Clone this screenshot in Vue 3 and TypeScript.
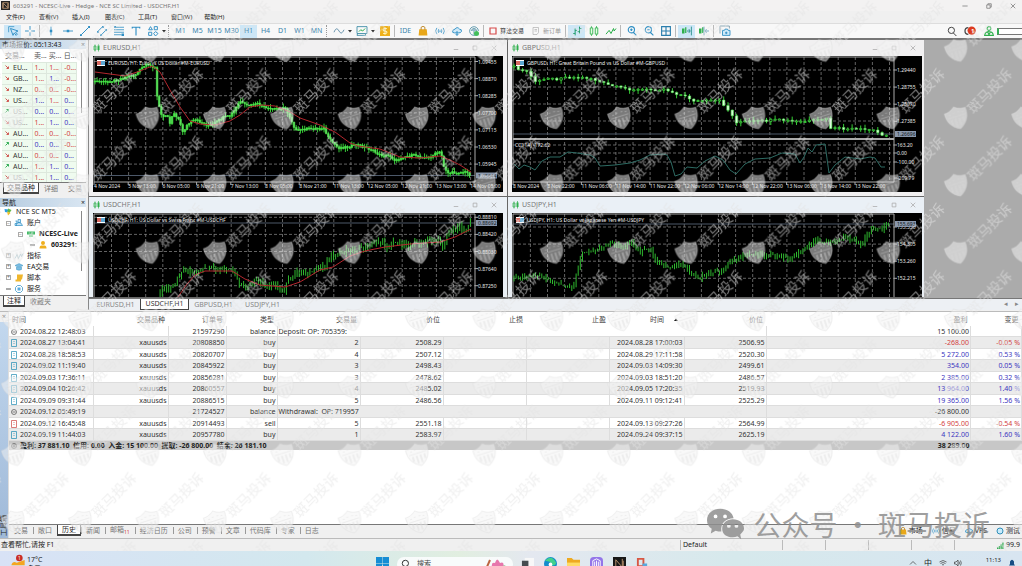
<script setup lang="ts">
type Point = [number, number]
interface Shape { d: string; f?: string; s?: string; w?: number }
interface Tool { id: string; label: string; icon?: string; text?: string; kind?: 'sep' | 'grip' | 'caret' | 'wide'; on?: boolean; off?: boolean }
interface Label { at: number; text: string }
interface Chart {
  id: string; title: string; caption: string; box: string; left: number; top: number
  axis: number; floor: number; bottom: number; columns: number[]; rows: number[]
  prices: Label[]; times: Label[]; tag: Label; wicks: string; up: string; down: string
  average: string; oscillator: string; active: boolean
}

const blue = '#2f8fc4'
const green = '#2eb04c'
const icons: Record<string, Shape[]> = {
  cursor: [{ d: 'M4 4l4 11 2-4 3 4 2-2-3-3 4-2z', s: blue, w: 1.5 }, { d: 'M1 10V1h9', s: blue, w: 1.2 }],
  cross: [{ d: 'M8 0v6M8 10v6M0 8h6M10 8h6', s: blue, w: 1.5 }],
  vline: [{ d: 'M8 1v14', s: blue, w: 1.3 }, { d: 'M6 6h4v4H6z', f: blue }],
  hline: [{ d: 'M0 8h16', s: blue, w: 1.4 }, { d: 'M6 6h4v4H6z', f: blue }],
  trend: [{ d: 'M2 14L14 2', s: blue, w: 1.6 }, { d: 'M0 13h3v3H0zM13 0h3v3h-3z', f: blue }],
  channel: [{ d: 'M1 9l8-8M6 15l9-9', s: blue, w: 1.5 }, { d: 'M0 8h3v3H0zM8 0h3v3H8zM5 13h3v3H5zM13 5h3v3h-3z', f: blue }],
  fibo: [{ d: 'M0 2h16M0 6h16M0 10h16M0 14h12', s: blue, w: 1.3 }, { d: 'M12 12h4v4h-4zM0 0h3v3H0z', f: blue }],
  text: [{ d: 'M2 4V2h12v2M8 2v13', s: blue, w: 1.8 }],
  shapes: [{ d: 'M4 1l3 5H1zM10 1h5v5h-5zM1 10h5v5H1zM12 9l4 3-4 4-3-4z', s: blue, w: 1.5 }],
  wave: [{ d: 'M0 10c3-7 5-7 8-2s5 4 8-2', s: '#4b7f9d', w: 1.3 }],
  template: [{ d: 'M0 1h16v11H0zM1 12l-1 3h14l-1-3', s: '#3c8ba5', w: 1.4 }, { d: 'M3 9l3-3 3 2 4-4', s: green, w: 1.6 }],
  dollar: [{ d: 'M0 0h16v16H0z', f: '#efb019' }, { d: 'M11 4H7Q4 4 5 7l6 2q1 3-2 3H5M8 2v12', s: '#fff6c5', w: 1.5 }],
  bag: [{ d: 'M2 5h12l1 10H1z', f: '#e8a719' }, { d: 'M5 6V2q3-3 6 0v4', s: '#b77d16', w: 1.4 }],
  signal: [{ d: 'M3 3q-4 5 0 10M6 5q-2 3 0 6M13 3q4 5 0 10M10 5q2 3 0 6', s: blue, w: 1.3 }, { d: 'M7 7h2v2H7z', f: blue }],
  cloud: [{ d: 'M4 11Q0 11 1 8 2 5 5 5q3-5 7 0 4 0 3 4-1 2-4 2zM8 8v7M6 13l2 2 2-2', f: '#cfe9f8', s: blue, w: 1.5 }],
  globe: [{ d: 'M13 13A7 7 0 1 1 15 8M4 8a4 4 0 0 1 8 0M6 8a2 2 0 0 1 4 0M8 8v6', s: '#43889f', w: 1.3 }, { d: 'M12 8a4 4 0 1 1 0 8 4 4 0 0 1 0-8', f: '#43bf5b' }],
  stop: [{ d: 'M2 2h12v12H2z', s: '#d64b4b', w: 2.4 }],
  order: [{ d: 'M2 1h11v10l-3 4H2zM5 5h5M5 8h5', s: '#aaa', w: 1.3 }],
  bars: [{ d: 'M5 4v11M2 12h3M5 7h3M12 1v11M9 9h3M12 4h3', s: '#189a68', w: 1.6 }],
  candles: [{ d: 'M4 0v16M12 0v16', s: green, w: 1.2 }, { d: 'M2 3h4v10H2zM10 3h4v10h-4z', f: '#e6ffe6', s: green, w: 1.4 }],
  line: [{ d: 'M0 13l5-6 3 5 4-8 1 4 3-4', s: green, w: 1.6 }],
  plus: [{ d: 'M12 6A5 5 0 1 1 2 6a5 5 0 0 1 10 0M10 10l5 5M5 6h4M7 4v4', s: blue, w: 1.8 }],
  minus: [{ d: 'M12 6A5 5 0 1 1 2 6a5 5 0 0 1 10 0M10 10l5 5M5 6h4', s: blue, w: 1.8 }],
  tile: [{ d: 'M1 1h14v14H1zM8 1v14M1 8h14', s: '#2b7ead', w: 1.8 }],
  scroll: [{ d: 'M0 4h4v8H0zM5 2h2v9H5z', f: green }, { d: 'M8 8h5M11 5l2 3-2 3M15 1v14', s: '#238c88', w: 1.4 }],
  shift: [{ d: 'M0 4h4v8H0zM5 2h2v9H5z', f: green }, { d: 'M10 8h6M12 5l-2 3 2 3M8 1v14', s: '#5593b2', w: 1.2 }],
  camera: [{ d: 'M0 12V0h15v4', s: '#4f7b91', w: 1 }, { d: 'M4 7h3l1-2h4l1 2h3v8H4z', f: '#d0ebfa', s: blue, w: 1.4 }, { d: 'M10 9v4M8 11h4', s: blue, w: 1.5 }],
  search: [{ d: 'M12 7A5 5 0 1 1 2 7a5 5 0 0 1 10 0M10 11l5 5', s: '#444', w: 1.6 }],
  user: [{ d: 'M8 1a3 3 0 1 1 0 6 3 3 0 0 1 0-6M1 15q1-6 7-6t7 6zM6 10l2 4 2-4', s: green, w: 1.7 }],
  pair: [{ d: 'M4 1v14M11 0v15', s: green, w: 1.4 }, { d: 'M2 4h4v8H2z', s: green, w: 1.4 }, { d: 'M9 3h4v9H9z', f: green }],
  brand: [{ d: 'M1 2l8 1-2 6-5-1z', f: '#2e9fe6' }, { d: 'M8 1l7 3-4 6-4-3z', f: '#62b947' }, { d: 'M6 7l7 3-5 5z', f: '#f4bd24' }],
  accounts: [{ d: 'M6 1h5v6H6zM2 13q1-6 6-6t7 6zM1 4h3v5H0v4h4', f: '#c5e4f7', s: blue, w: 1.4 }],
  server: [{ d: 'M0 3h16v6H0zM4 11h8v2H4z', f: '#42b966' }, { d: 'M3 6h3M8 6h5', s: '#fff', w: 1 }],
  person: [{ d: 'M8 0a4 4 0 1 1 0 8 4 4 0 0 1 0-8M1 15q0-6 4-6h6q4 0 4 6z', f: '#efaf1e' }],
  indicator: [{ d: 'M0 13l4-8 3 8 4-9 2 5 3-6', s: '#75a8b8', w: 1.3 }],
  expert: [{ d: 'M0 5l8-4 8 4-8 4zM3 8v5q5 3 10 0V8', f: '#78bce3', s: '#3d91bd', w: 1 }],
  script: [{ d: 'M4 1h12l-2 10H4zM1 11h11v4H1z', f: '#efb62c' }],
  service: [{ d: 'M5 1h6l4 4v6l-4 4H5l-4-4V5z', s: blue, w: 1.5 }, { d: 'M5 5h6v6H5z', f: '#57aade' }],
  ring: [{ d: 'M8 2a6 6 0 1 1 0 12A6 6 0 0 1 8 2', f: '#c9ebfb', s: '#318fb8', w: 2 }],
}

const sep = (id: string): Tool => ({ id, label: '', kind: 'sep' })
const caret = (id: string): Tool => ({ id, label: '更多', kind: 'caret' })
const tools: Tool[] = [
  { id: 'cursor', label: '光标', icon: 'cursor', on: true }, { id: 'cross', label: '十字', icon: 'cross' }, sep('s1'),
  { id: 'v', label: '垂直线', icon: 'vline' }, { id: 'h', label: '水平线', icon: 'hline' }, { id: 't', label: '趋势线', icon: 'trend' },
  { id: 'c', label: '通道', icon: 'channel' }, { id: 'f', label: '斐波那契', icon: 'fibo' }, { id: 'x', label: '文本', icon: 'text' },
  { id: 'o', label: '图形', icon: 'shapes' }, caret('c1'), { id: 'g1', label: '', kind: 'grip' },
  ...['M1', 'M5', 'M15', 'M30', 'H1', 'H4', 'D1', 'W1', 'MN'].map((p): Tool => ({ id: p, label: p, text: p, on: p === 'H1' })),
  { id: 'g2', label: '', kind: 'grip' }, { id: 'w', label: '指标', icon: 'wave' }, caret('c2'),
  { id: 'tp', label: '模板', icon: 'template' }, caret('c3'), { id: 'd', label: '报价', icon: 'dollar' }, sep('s2'),
  { id: 'ide', label: 'IDE', text: 'IDE' }, { id: 'bag', label: '商店', icon: 'bag' }, { id: 'sig', label: '信号', icon: 'signal' },
  { id: 'cl', label: '云', icon: 'cloud' }, { id: 'gl', label: '网络', icon: 'globe' }, sep('s3'),
  { id: 'algo', label: '算法交易', icon: 'stop', text: '算法交易', kind: 'wide' }, { id: 'ord', label: '新订单', icon: 'order', text: '新订单', kind: 'wide', off: true }, sep('s4'),
  { id: 'bars', label: '柱形图', icon: 'bars', on: true }, { id: 'can', label: '蜡烛图', icon: 'candles' }, { id: 'line', label: '折线图', icon: 'line' }, sep('s5'),
  { id: 'in', label: '放大', icon: 'plus' }, { id: 'out', label: '缩小', icon: 'minus' }, { id: 'tile', label: '平铺', icon: 'tile' }, sep('s6'),
  { id: 'scr', label: '自动滚动', icon: 'scroll', on: true }, { id: 'shf', label: '平移', icon: 'shift' }, sep('s7'), { id: 'cam', label: '截图', icon: 'camera' },
]
const menus = ['文件(F)', '查看(V)', '插入(I)', '图表(C)', '工具(T)', '窗口(W)', '帮助(H)']

const quotes = [
  ['d', 'EU...', '1...', '1...', '-0...', 'rrr'], ['d', 'GB...', '1...', '1...', '-0...', 'rbr'], ['d', 'NZ...', '0...', '0...', '-0...', 'rrr'],
  ['d', 'US...', '1...', '1...', '0...', 'brb'], ['u', 'US...', '0...', '0...', '0...', 'bbb'], ['d', 'US...', '1...', '1...', '0...', 'rbb'],
  ['d', 'AU...', '0...', '0...', '-0...', 'rrr'], ['u', 'AU...', '0...', '0...', '-0...', 'bbr'], ['d', 'AU...', '0...', '0...', '0...', 'rrb'],
  ['u', 'AU...', '1...', '1...', '0...', 'rbb'], ['d', 'US...', '1...', '1...', '0...', 'rbb'],
]
const tree = [
  { text: 'NCE SC MT5', icon: 'brand', level: 0, bold: false, mark: '' }, { text: '账户', icon: 'accounts', level: 1, bold: false, mark: '−' },
  { text: 'NCESC-Live', icon: 'server', level: 2, bold: true, mark: '−' }, { text: '603291:', icon: 'person', level: 3, bold: true, mark: '' },
  { text: '指标', icon: 'indicator', level: 1, bold: false, mark: '+' }, { text: 'EA交易', icon: 'expert', level: 1, bold: false, mark: '+' },
  { text: '脚本', icon: 'script', level: 1, bold: false, mark: '+' }, { text: '服务', icon: 'service', level: 1, bold: false, mark: '' },
]

function levelAt(points: Point[], x: number): number {
  for (let i = 1; i < points.length; i++) {
    const [x0, y0] = points[i - 1]
    const [x1, y1] = points[i]
    if (x <= x1) return y0 + ((y1 - y0) * (x - x0)) / (x1 - x0)
  }
  return points[points.length - 1][1]
}
function noise(n: number): number {
  const v = Math.sin(n * 12.9898) * 43758.5453
  return v - Math.floor(v)
}
type Style = 'solid' | 'candle' | 'bar'
function draw(points: Point[], step: number, style: Style, spread: number) {
  let wicks = '', up = '', down = ''
  const last = points[points.length - 1][0]
  let open = points[0][1]
  let i = 0
  for (let x = points[0][0]; x <= last; x += step, i++) {
    const close = levelAt(points, x) + (noise(i + 3) - 0.5) * spread * 0.6
    const a = Math.min(open, close), b = Math.max(open, close)
    const hi = a - noise(i + 40) * spread, lo = b + noise(i + 90) * spread
    wicks += `M${x.toFixed(1)} ${hi.toFixed(1)}V${lo.toFixed(1)}`
    if (style !== 'bar') {
      const half = style === 'candle' ? 1.2 : 0.8
      const body = `M${(x - half).toFixed(1)} ${a.toFixed(1)}h${half * 2}v${Math.max(1, b - a).toFixed(1)}h${-half * 2}z`
      if (close > open + 0.6) down += body
      else up += body
    }
    open = close
  }
  return { wicks, up, down }
}
function curve(points: Point[]): string {
  return points.map(([x, y], i) => `${i ? 'L' : 'M'}${x} ${y}`).join('')
}
function range(from: number, step: number, count: number): number[] {
  return Array.from({ length: count }, (_, i) => from + step * i)
}

const leftTimes = ['4 Nov 2024', '5 Nov 13:00', '6 Nov 05:00', '6 Nov 21:00', '7 Nov 13:00', '8 Nov 05:00', '8 Nov 21:00', '11 Nov 13:00', '12 Nov 05:00', '12 Nov 21:00', '13 Nov 13:00', '14 Nov 05:00']
const rightTimes = ['8 Nov 2024', '8 Nov 22:00', '11 Nov 06:00', '11 Nov 14:00', '11 Nov 22:00', '12 Nov 06:00', '12 Nov 14:00', '12 Nov 22:00', '13 Nov 06:00', '13 Nov 14:00', '13 Nov 22:00']
const spaced = (texts: string[], from: number): Label[] => texts.map((text, i) => ({ text, at: from + i * 34.2 }))
const priced = (texts: string[], from: number): Label[] => texts.map((text, i) => ({ text, at: from + i * 17.1 }))

const charts: Chart[] = [
  {
    id: 'EURUSD', title: 'EURUSD,H1', caption: 'EURUSD, H1: Euro vs US Dollar #M-EURUSD', box: '93 56 410 136', left: 94, top: 57, axis: 475, floor: 182, bottom: 182,
    columns: range(111.5, 17.1, 22), rows: range(61.5, 17.1, 7),
    prices: priced(['1.09455', '1.08870', '1.08285', '1.07700', '1.07115', '1.06530', '1.05945'], 61.5), times: spaced(leftTimes, 94), tag: { at: 175.5, text: '1.05644' },
    ...draw([[95, 81], [105, 82], [117, 80], [125, 77], [135, 75], [142, 68], [146, 65], [155, 67], [156, 92], [160, 110], [162, 118], [167, 113], [170, 124], [173, 112], [178, 118], [183, 132], [188, 124], [195, 120], [203, 123], [210, 126], [218, 121], [222, 118], [230, 116], [235, 110], [240, 101], [246, 106], [258, 104], [267, 109], [285, 108], [290, 117], [296, 131], [305, 129], [324, 128], [328, 138], [338, 148], [345, 147], [358, 145], [370, 149], [380, 155], [390, 156], [396, 161], [402, 157], [415, 155], [428, 158], [435, 154], [441, 152], [443, 165], [448, 173], [466, 172], [471, 176]], 2.14, 'solid', 4),
    average: curve([[95, 72], [110, 74], [125, 76], [140, 71], [152, 66], [160, 72], [170, 90], [180, 107], [190, 121], [200, 124], [215, 125], [230, 121], [240, 115], [250, 107], [262, 105], [275, 106], [290, 112], [300, 118], [320, 125], [335, 132], [350, 143], [358, 146], [380, 149], [400, 157], [420, 158], [440, 156], [450, 160], [460, 165], [471, 172]]), oscillator: '', active: false,
  },
  {
    id: 'GBPUSD', title: 'GBPUSD,H1', caption: 'GBPUSD, H1: Great Britain Pound vs US Dollar #M-GBPUSD', box: '512 56 410 136', left: 513, top: 57, axis: 894, floor: 138, bottom: 182,
    columns: range(530.4, 17.1, 22), rows: [70, 87, 104, 121, 145, 153, 162],
    prices: [...priced(['1.29440', '1.28755', '1.28070', '1.27385'], 70), { at: 145, text: '163.20' }, { at: 153, text: '0.00' }, { at: 162, text: '-100.00' }, { at: 178, text: '-209.79' }],
    times: spaced(rightTimes, 513), tag: { at: 134, text: '1.26696' },
    ...draw([[514, 66], [518, 70], [527, 71], [531, 77], [535, 82], [540, 80], [547, 77], [555, 80], [560, 77], [590, 78], [605, 84], [620, 88], [640, 90], [665, 89], [672, 92], [684, 96], [695, 101], [720, 101], [725, 106], [731, 114], [736, 122], [760, 121], [780, 120], [800, 122], [827, 119], [830, 128], [845, 129], [873, 130], [880, 134], [888, 135]], 4.28, 'candle', 4),
    average: '', oscillator: curve([[514, 164], [519, 169], [524, 165], [530, 167], [535, 170], [542, 161], [550, 157], [560, 157], [568, 152], [577, 153], [590, 155], [595, 158], [600, 166], [615, 165], [630, 163], [640, 160], [650, 155], [663, 154], [667, 155], [671, 162], [675, 176], [681, 174], [687, 167], [697, 168], [705, 161], [715, 156], [723, 160], [730, 170], [736, 174], [745, 164], [755, 159], [770, 158], [782, 153], [795, 154], [800, 163], [804, 157], [808, 148], [812, 152], [816, 145], [825, 144], [829, 173], [835, 165], [845, 157], [860, 159], [870, 157], [875, 158], [881, 167], [885, 167]]), active: false,
  },
  {
    id: 'USDCHF', title: 'USDCHF,H1', caption: 'USDCHF, H1: US Dollar vs Swiss Franc #M-USDCHF', box: '93 213 410 85', left: 94, top: 214, axis: 475, floor: 298, bottom: 298,
    columns: range(111.5, 17.1, 22), rows: range(217.3, 17.1, 5),
    prices: priced(['0.88810', '0.88420', '0.88030', '0.87640', '0.87250'], 217.3), times: [], tag: { at: 223, text: '0.88692' },
    ...draw([[158, 300], [161, 292], [163, 285], [166, 290], [170, 288], [175, 283], [180, 272], [185, 270], [192, 272], [200, 270], [212, 267], [220, 269], [232, 268], [238, 280], [243, 287], [250, 284], [257, 280], [262, 285], [270, 285], [278, 287], [283, 292], [288, 282], [296, 272], [307, 275], [315, 269], [325, 267], [330, 258], [340, 252], [350, 250], [365, 248], [375, 243], [383, 241], [386, 250], [395, 242], [405, 245], [420, 243], [430, 240], [440, 241], [442, 250], [448, 232], [460, 226], [463, 231], [471, 222]], 2.14, 'bar', 5),
    average: curve([[178, 297], [187, 284], [195, 275], [205, 271], [232, 271], [245, 279], [260, 285], [285, 287], [300, 282], [320, 270], [333, 267], [350, 256], [365, 251], [385, 247], [410, 244], [440, 242], [455, 237], [471, 229]]), oscillator: '', active: true,
  },
  {
    id: 'USDJPY', title: 'USDJPY,H1', caption: 'USDJPY, H1: US Dollar vs Japanese Yen #M-USDJPY', box: '512 213 410 85', left: 513, top: 214, axis: 894, floor: 298, bottom: 298,
    columns: range(530.4, 17.1, 22), rows: range(227, 17.1, 4),
    prices: priced(['155.350', '154.305', '153.260', '152.215'], 227), times: [], tag: { at: 224, text: '155.693' },
    ...draw([[514, 278], [525, 277], [535, 274], [545, 278], [555, 282], [565, 287], [573, 286], [577, 272], [582, 252], [590, 251], [600, 248], [610, 243], [620, 247], [632, 243], [640, 252], [650, 249], [657, 263], [670, 268], [680, 264], [690, 272], [699, 278], [710, 272], [722, 272], [730, 262], [740, 257], [755, 254], [780, 256], [790, 259], [803, 250], [815, 240], [830, 243], [845, 237], [855, 240], [861, 246], [866, 235], [875, 228], [882, 229], [889, 222]], 2.14, 'bar', 4),
    average: '', oscillator: '', active: true,
  },
]

interface Deal { time: string; order: string; kind: string; note?: string; volume?: string; price?: string; closed?: string; exit?: string; profit: string; change?: string }
const deals: Deal[] = [
  { time: '2024.08.22 12:48:03', order: '21597290', kind: 'balance', note: 'Deposit: OP: 705359:', profit: '15 100.00' },
  { time: '2024.08.27 13:04:41', order: '20808850', kind: 'buy', volume: '2', price: '2508.29', closed: '2024.08.28 17:00:03', exit: '2506.95', profit: '-268.00', change: '-0.05 %' },
  { time: '2024.08.28 18:58:53', order: '20820707', kind: 'buy', volume: '4', price: '2507.12', closed: '2024.08.29 17:11:58', exit: '2520.30', profit: '5 272.00', change: '0.53 %' },
  { time: '2024.09.02 11:19:40', order: '20845922', kind: 'buy', volume: '3', price: '2498.43', closed: '2024.09.03 14:09:30', exit: '2499.61', profit: '354.00', change: '0.05 %' },
  { time: '2024.09.03 17:36:11', order: '20856281', kind: 'buy', volume: '3', price: '2478.62', closed: '2024.09.03 18:51:20', exit: '2486.57', profit: '2 385.00', change: '0.32 %' },
  { time: '2024.09.04 10:26:42', order: '20860557', kind: 'buy', volume: '4', price: '2485.02', closed: '2024.09.05 17:20:35', exit: '2519.93', profit: '13 964.00', change: '1.40 %' },
  { time: '2024.09.09 09:31:44', order: '20886515', kind: 'buy', volume: '5', price: '2486.56', closed: '2024.09.11 09:12:41', exit: '2525.29', profit: '19 365.00', change: '1.56 %' },
  { time: '2024.09.12 05:49:19', order: '21724527', kind: 'balance', note: 'Withdrawal:  OP: 719957', profit: '-26 800.00' },
  { time: '2024.09.12 16:45:48', order: '20914493', kind: 'sell', volume: '5', price: '2551.18', closed: '2024.09.13 09:27:26', exit: '2564.99', profit: '-6 905.00', change: '-0.54 %' },
  { time: '2024.09.19 11:44:03', order: '20957780', kind: 'buy', volume: '1', price: '2583.97', closed: '2024.09.24 09:37:15', exit: '2625.19', profit: '4 122.00', change: '1.60 %' },
]
const heads = ['时间', '交易品种', '订单号', '类型', '交易量', '价位', '止损', '止盈', '时间', '价位', '盈利', '变更']
const boxTabs = ['交易', '敞口', '历史', '新闻', '邮箱', '经济日历', '公司', '预警', '文章', '代码库', '专家', '日志']
const services = [{ text: '市场', icon: 'bag' }, { text: '信号', icon: 'signal' }, { text: 'VPS', icon: 'cloud' }, { text: '测试', icon: 'ring' }]
const tone = (deal: Deal) => (!deal.change ? '' : deal.profit.startsWith('-') ? 'r' : 'b')
</script>

<template>
  <div class="app">
    <header class="title">
      <svg class="logo" viewBox="0 0 16 16" aria-hidden="true"><path d="M0 0h16v16H0z" fill="#252525" /><path d="M4 12V4l8 8V4M3 3h10v10H3z" fill="none" stroke="#c29b78" stroke-width="1.4" /></svg>
      <span class="name">603291 - NCESC-Live - Hedge - NCE SC Limited - USDCHF,H1</span>
      <div class="winctl">
        <button aria-label="最小化"><svg viewBox="0 0 16 16"><path d="M1 8h14" /></svg></button>
        <button aria-label="还原"><svg viewBox="0 0 16 16"><path d="M2 5h9v9H2zM5 5V2h9v9h-3" /></svg></button>
        <button aria-label="关闭"><svg viewBox="0 0 16 16"><path d="M2 2l12 12M14 2L2 14" /></svg></button>
      </div>
    </header>
    <nav class="menu"><button v-for="m in menus" :key="m">{{ m }}</button></nav>

    <div class="toolbar">
      <template v-for="t in tools" :key="t.id">
        <i v-if="t.kind === 'sep'" class="sep"></i>
        <i v-else-if="t.kind === 'grip'" class="grip"></i>
        <button v-else-if="t.kind === 'caret'" class="caret" :aria-label="t.label"><svg viewBox="0 0 8 8"><path d="M0 2h8L4 7z" fill="#333" /></svg></button>
        <button v-else class="tool" :class="{ on: t.on, off: t.off, wide: t.kind === 'wide' }" :aria-label="t.label">
          <svg v-if="t.icon" class="ic" viewBox="0 0 16 16"><path v-for="(p, i) in icons[t.icon]" :key="i" :d="p.d" :fill="p.f ?? 'none'" :stroke="p.s ?? 'none'" :stroke-width="p.w" /></svg>
          <span v-if="t.text">{{ t.text }}</span>
        </button>
      </template>
      <div class="right">
        <button class="tool" aria-label="搜索"><svg class="ic" viewBox="0 0 16 16"><path v-for="(p, i) in icons.search" :key="i" :d="p.d" fill="none" :stroke="p.s" :stroke-width="p.w" /></svg></button>
        <button class="tool alert" aria-label="通知"><svg viewBox="0 0 16 12"><path d="M6 2a4 4 0 0 0 0 8" fill="none" stroke="#444" stroke-width="1.5" /><circle cx="10" cy="5.5" r="5" fill="#dc3a20" /></svg><b>1</b></button>
        <button class="tool" aria-label="账户"><svg class="ic" viewBox="0 0 16 16"><path v-for="(p, i) in icons.user" :key="i" :d="p.d" fill="none" :stroke="p.s" :stroke-width="p.w" /></svg></button>
        <i class="meter"></i>
      </div>
    </div>

    <main class="work">
      <aside class="side">
        <section class="market">
          <h2>市场报价: 05:13:43<button aria-label="关闭市场报价">×</button></h2>
          <div class="pane quotes">
            <table>
              <thead><tr><th>交易...</th><th>卖...</th><th>买...</th><th>日...</th></tr></thead>
              <tbody>
                <tr v-for="(q, n) in quotes" :key="n" :class="{ dim: n === 4 || n === 5 || n === 10 }">
                  <td><svg class="dir" viewBox="0 0 8 8"><path v-if="q[0] === 'u'" d="M1 7l6-6M3 1h4v4" stroke="#35ae58" /><path v-else d="M1 1l6 6M7 3v4H3" stroke="#d05a55" /></svg>{{ q[1] }}</td>
                  <td v-for="k in 3" :key="k" :class="q[5][k - 1]">{{ q[k + 1] }}</td>
                </tr>
              </tbody>
            </table>
            <i class="thumb"></i>
          </div>
          <div class="tabs"><button class="sel">交易品种</button><button>详细</button><button>交易</button></div>
        </section>
        <section class="navigator">
          <h2>导航<button aria-label="关闭导航">×</button></h2>
          <div class="pane">
            <ul>
              <li v-for="n in tree" :key="n.text" :class="['l' + n.level, { bold: n.bold }]">
                <i v-if="n.level" class="knot" :class="{ leaf: !n.mark }">{{ n.mark }}</i>
                <svg class="ic" viewBox="0 0 16 16"><path v-for="(p, i) in icons[n.icon]" :key="i" :d="p.d" :fill="p.f ?? 'none'" :stroke="p.s ?? 'none'" :stroke-width="p.w" /></svg>{{ n.text }}
              </li>
            </ul>
            <i class="thumb"></i>
          </div>
          <div class="tabs"><button class="sel">注释</button><button>收藏夹</button></div>
        </section>
      </aside>

      <div class="desk">
        <div class="windows">
          <section v-for="c in charts" :key="c.id" class="win" :class="{ cool: c.active }">
            <h3>
              <svg class="ic" viewBox="0 0 16 16"><path v-for="(p, i) in icons.pair" :key="i" :d="p.d" :fill="p.f ?? 'none'" :stroke="p.s ?? 'none'" :stroke-width="p.w" /></svg>{{ c.title }}
              <span class="winctl">
                <button aria-label="最小化"><svg viewBox="0 0 16 16"><path d="M2 12h12" /></svg></button>
                <button aria-label="最大化"><svg viewBox="0 0 16 16"><path d="M3 3h10v10H3z" /></svg></button>
                <button aria-label="关闭"><svg viewBox="0 0 16 16"><path d="M2 2l12 12M14 2L2 14" /></svg></button>
              </span>
            </h3>
            <svg class="chart" :viewBox="c.box" role="img" :aria-label="c.caption">
              <g class="grid">
                <line v-for="x in c.columns" :key="'x' + x" :x1="x" :x2="x" :y1="c.top" :y2="c.bottom" />
                <line v-for="y in c.rows" :key="'y' + y" :x1="c.left" :x2="c.axis" :y1="y" :y2="y" />
              </g>
              <line class="bid" :x1="c.left" :x2="c.axis" :y1="c.tag.at" :y2="c.tag.at" />
              <path class="frame" :d="`M${c.left} ${c.bottom}V${c.top}H${c.axis}V${c.bottom}`" />
              <path v-if="c.times.length" class="base" :d="`M${c.left} ${c.bottom}H${c.axis}`" />
              <path class="wick" :d="c.wicks" :class="{ thin: c.active }" />
              <path class="up" :d="c.up" :class="{ solid: c.average }" />
              <path class="down" :d="c.down" :class="{ solid: c.average }" />
              <path v-if="c.average" class="average" :d="c.average" />
              <template v-if="c.oscillator">
                <path class="split" :d="`M${c.left} 139H${c.axis}`" />
                <path class="osc" :d="c.oscillator" />
                <text :x="c.left + 2" y="147">CCI(14) -172.62</text>
              </template>
              <g v-for="p in c.prices" :key="p.text"><path class="tick" :d="`M${c.axis} ${p.at}h3`" /><text :x="c.axis + 3" :y="p.at + 2">{{ p.text }}</text></g>
              <rect class="tag" :x="c.axis + 1" :y="c.tag.at - 3" width="21" height="6" /><text class="tagtext" :x="c.axis + 3" :y="c.tag.at + 2">{{ c.tag.text }}</text>
              <g v-for="t in c.times" :key="t.text"><path class="tick" :d="`M${t.at} 182v3`" /><text :x="t.at" y="188">{{ t.text }}</text></g>
              <rect :x="c.left + 3" :y="c.top + 3" width="8" height="6" fill="#fff" /><path :d="`M${c.left + 3} ${c.top + 4}h4v4h-4z`" fill="#d86a62" /><path :d="`M${c.left + 7} ${c.top + 4}h4v4h-4z`" fill="#5ba7d3" />
              <text :x="c.left + 14" :y="c.top + 8">{{ c.caption }}</text>
            </svg>
          </section>
        </div>
        <div class="charttabs">
          <button>EURUSD,H1</button><button class="sel">USDCHF,H1</button><button>GBPUSD,H1</button><button>USDJPY,H1</button>
          <span class="arrows">◂ ▸</span>
        </div>
      </div>
    </main>

    <section class="toolbox">
      <div class="rail"><button aria-label="关闭工具箱">×</button><span>工具箱</span></div>
      <div class="history">
        <table>
          <colgroup><col v-for="(h, i) in heads" :key="i" :class="'c' + i"></colgroup>
          <thead><tr><th v-for="(h, i) in heads" :key="i">{{ h }}<svg v-if="i === 8" class="sort" viewBox="0 0 8 8"><path d="M0 6h8L4 1z" /></svg></th></tr></thead>
          <tbody>
            <tr v-for="d in deals" :key="d.order">
              <td><svg class="doc" viewBox="0 0 12 16"><template v-if="d.note"><circle cx="6" cy="8" r="5" stroke="#555" /><path d="M3 8h6" stroke="#555" /></template><path v-else d="M1 1h10v14H1zM5 5h2M5 9h2" :stroke="d.kind === 'sell' ? '#d0504c' : '#2b91b5'" /></svg>{{ d.time }}</td>
              <td>{{ d.note ? '' : 'xauusds' }}</td><td>{{ d.order }}</td><td>{{ d.kind }}</td>
              <td v-if="d.note" colspan="6" class="note">{{ d.note }}</td>
              <template v-else><td>{{ d.volume }}</td><td>{{ d.price }}</td><td></td><td></td><td>{{ d.closed }}</td><td>{{ d.exit }}</td></template>
              <td :class="tone(d)">{{ d.profit }}</td><td :class="tone(d)">{{ d.change }}</td>
            </tr>
          </tbody>
          <tfoot><tr><td colspan="10"><svg class="doc" viewBox="0 0 12 16"><circle cx="6" cy="8" r="5" stroke="#555" /><path d="M3 8h6M6 5v6" stroke="#555" /></svg>盈利: 37 881.10&ensp;信用: 0.00&ensp;入金: 15 100.00&ensp;提取: -26 800.00&ensp;结余: 26 181.10</td><td>38 289.00</td><td></td></tr></tfoot>
        </table>
        <div class="tabs">
          <button v-for="t in boxTabs" :key="t" :class="{ sel: t === '历史' }">{{ t }}<sub v-if="t === '邮箱'">11</sub></button>
          <div class="services"><button v-for="s in services" :key="s.text"><svg class="ic" viewBox="0 0 16 16"><path v-for="(p, i) in icons[s.icon]" :key="i" :d="p.d" :fill="p.f ?? 'none'" :stroke="p.s ?? 'none'" :stroke-width="p.w" /></svg>{{ s.text }}</button></div>
        </div>
      </div>
    </section>

    <footer class="status">
      <span class="help">查看帮忙,请按 F1</span><span class="profile">Default</span><i></i><i></i><i></i><i></i><i></i>
      <span class="net"><svg viewBox="0 0 16 16"><path d="M0 12h3v4H0zM4 9h3v7H4zM8 5h3v11H8zM12 1h3v15h-3z" fill="#35ad54" /></svg>99.9</span>
    </footer>
    <div class="taskbar">
      <button class="weather" aria-label="天气"><svg viewBox="0 0 24 16"><path d="M2 16q2-7 8-4l12-4v8z" fill="#f4a620" /><circle cx="14" cy="5" r="5" fill="#c92d25" /><text x="12" y="8" font-size="7" fill="#fff">1</text></svg><span>17°C<br>多云</span></button>
      <div class="dock">
        <svg class="app-ic" viewBox="0 0 14 14"><path d="M0 0h7v7H0zM7.5 0H14v7H7.5zM0 7.5h7V14H0zM7.5 7.5H14V14H7.5z" fill="#158dd4" /></svg>
        <label class="find"><svg class="ic" viewBox="0 0 16 16"><path :d="icons.search[0].d" fill="none" stroke="#333" stroke-width="1.6" /></svg><input type="text" placeholder="搜索" aria-label="搜索"><svg class="flower" viewBox="0 0 24 12"><path d="M1 11L5 2" stroke="#bb6540" stroke-width="2" /><path d="M7 9q-1-5 3-4 2-7 5 0 5-2 3 5z" fill="#e777ac" /><path d="M16 10q3-5 7 0z" fill="#4d9c45" /></svg></label>
        <svg class="app-ic" viewBox="0 0 14 14"><path d="M4 1h10v10H4z" fill="#f8f8f8" /><path d="M1 4h7v9H1z" fill="#454c50" /></svg>
        <svg class="app-ic" viewBox="0 0 14 14"><circle cx="7" cy="7" r="7" fill="#128dcd" /><path d="M1 4q7-7 12 2 0 4-6 3 3-4-6-5" fill="#43d08c" /><circle cx="7" cy="8" r="2" fill="#fff" /></svg>
        <svg class="app-ic" viewBox="0 0 14 14"><path d="M0 1h5l2 2h7v10H0z" fill="#eeaa21" /><path d="M0 6h14v7H0z" fill="#ffdb65" /></svg>
        <svg class="app-ic" viewBox="0 0 14 14"><rect width="14" height="14" rx="4" fill="#9476e9" /><path d="M3 4l4-2 4 2v7H3zM5 5v5M7 4v6M9 5v5" fill="none" stroke="#fff" /></svg>
        <svg class="app-ic" viewBox="0 0 14 14"><path d="M0 0h14v14H0z" fill="#181818" /><path d="M3 12V3l7 8V2M11 4v8" fill="none" stroke="#bd956f" /></svg>
        <svg class="app-ic" viewBox="0 0 14 14"><path d="M2 2h6v8H2z" fill="none" stroke="#d85743" stroke-width="2" /><path d="M7 7h5v5H7z" fill="#57a7dd" /></svg>
      </div>
      <div class="tray"><svg viewBox="0 0 16 16"><path d="M2 11l6-6 6 6" /></svg><span>中</span><svg viewBox="0 0 16 16"><path d="M1 6q7-6 14 0M3 9q5-4 10 0M6 12q2-2 4 0" /></svg><svg viewBox="0 0 16 16"><path d="M1 6h3l4-4v12l-4-4H1zM10 5q2 3 0 6M13 3q3 5 0 10" /></svg><time>11:13<br>2024/11/14</time><svg class="bell" viewBox="0 0 16 16"><path d="M2 13l2-3V5q4-7 8 0v5l2 3z" /></svg></div>
    </div>

    <svg class="watermark" aria-hidden="true">
      <defs>
        <pattern id="mark" width="67.35" height="67.35" patternUnits="userSpaceOnUse">
          <g transform="translate(14 50) rotate(-18)">
            <path class="shield" d="M-11-7Q-5-7 0-11 5-7 11-7 12 6 0 12-12 6-11-7z" />
            <path class="edge" d="M-11-7Q-5-7 0-11 5-7 11-7 12 6 0 12-12 6-11-7zM-9-1H9" />
            <path class="stripes" d="M-6 1v5M-2 1v8M2 1v8M6 1v5" />
            <path class="stars" d="M-7-4h2M-3-5h2M2-5h2M6-4h2" />
          </g>
          <text transform="translate(46 23) rotate(-45)">斑马投诉</text>
          <text transform="translate(-21 23) rotate(-45)">斑马投诉</text>
          <text transform="translate(46 90) rotate(-45)">斑马投诉</text>
        </pattern>
      </defs>
      <rect width="100%" height="100%" fill="url(#mark)" />
    </svg>
    <div class="account">
      <svg viewBox="0 0 40 32" aria-hidden="true"><path fill-rule="evenodd" d="M14 0C6 0 0 5 0 12c0 4 2 7 5 9l-1 5 5-3q3 1 6 1C14 15 20 10 28 10 27 4 21 0 14 0zM9 6a2 2 0 1 1 0 4 2 2 0 0 1 0-4zM19 6a2 2 0 1 1 0 4 2 2 0 0 1 0-4z" /><path fill-rule="evenodd" d="M27 11c-6 0-11 4-11 10s5 9 11 9q3 0 5-1l4 3-1-5c2-2 4-4 4-6 0-6-5-10-12-10zM23 16a2 2 0 1 1 0 4 2 2 0 0 1 0-4zM31 16a2 2 0 1 1 0 4 2 2 0 0 1 0-4z" /></svg>
      <span>公众号 · 斑马投诉</span>
    </div>
  </div>
</template>

<style>
html, body { margin: 0; overflow: hidden; }
</style>

<style scoped>
.app { position: relative; display: flex; flex-direction: column; height: 100vh; overflow: hidden; background: #f0f0f0; color: #333; font: 7px/10px "Noto Sans", "Noto Sans CJK SC", sans-serif; }
.app *, .app *::before { box-sizing: border-box; }
button { border: 0; padding: 0; background: none; color: inherit; font: inherit; white-space: nowrap; }
h2, h3, ul { margin: 0; padding: 0; font: inherit; list-style: none; }
.ic { width: 10px; height: 10px; flex: none; overflow: visible; }
.r { color: #d3413d; } .b { color: #3c35c0; }

.title { display: flex; align-items: center; height: 11px; background: #f3f2f2; color: #777; font-size: 6px; }
.logo { width: 9px; height: 9px; margin: 0 3px 0 1px; }
.winctl { display: flex; gap: 18px; margin-left: auto; padding-right: 6px; }
.winctl button { display: flex; width: 6px; height: 6px; }
.winctl svg { width: 6px; height: 6px; fill: none; stroke: #777; stroke-width: 2; }
.menu { display: flex; gap: 12px; height: 12px; padding-left: 6px; align-items: center; font-size: 6px; color: #222; }
.menu button { min-width: 21px; text-align: left; }
.toolbar { display: flex; align-items: center; height: 17px; padding-left: 4px; background: #f8f8f8; border-top: 1px solid #ddd; border-bottom: 2px solid #777; }
.tool { display: flex; align-items: center; justify-content: center; width: 17px; height: 13px; flex: none; color: #3a84ac; }
.tool.on { background: #cde7f7; }
.tool.wide { width: auto; gap: 3px; padding: 0 3px; font-size: 6px; color: #222; }
.tool.wide .ic { width: 8px; height: 8px; }
.tool.wide.off { color: #999; padding-left: 5px; }
.sep { width: 1px; height: 12px; margin: 0 2px 0 1px; background: #b9b9b9; flex: none; }
.grip { width: 1px; height: 12px; margin: 0 3px 0 1px; border-left: 1px dotted #999; flex: none; }
.caret { display: flex; width: 6px; justify-content: center; }
.caret svg { width: 4px; height: 4px; }
.right { display: flex; align-items: center; margin-left: auto; }
.alert { position: relative; width: 20px; }
.alert svg { width: 14px; height: 10px; }
.alert b { position: absolute; left: 11px; top: 1px; color: #fff; font-size: 6px; }
.meter { width: 25px; height: 7px; border: 1px solid #777; border-left: 2px solid #35ad54; border-right: 0; background: #fff; }

.work { display: flex; height: 270px; flex: none; }
.side { width: 89px; flex: none; border-right: 1px solid #888; background: #f0f0f0; }
.side h2 { display: flex; justify-content: space-between; width: 86px; height: 9px; padding: 0 1px 0 2px; align-items: center; background: linear-gradient(90deg, #b6cce0, #d9e6f2); color: #222; font-size: 7px; }
.pane { display: flex; justify-content: space-between; width: 86px; background: #fff; overflow: hidden; }
.market { height: 158px; }
.quotes { height: 133px; }
.quotes table { width: 75px; margin-left: 2px; align-self: flex-start; table-layout: fixed; border-collapse: collapse; line-height: 9px; }
.quotes th { height: 13px; font-weight: 400; color: #555; text-align: left; padding: 0; }
.quotes td { height: 11px; padding: 0 0 0 2px; border: 1px solid #dde8dd; border-left: 0; background: #effbef; white-space: nowrap; overflow: hidden; }
.quotes th + th { padding-left: 2px; }
.quotes th:first-child { width: 30px; padding-left: 3px; }
.dir { width: 4px; height: 4px; margin: 0 4px 1px 1px; fill: none; stroke-width: 2; }
.dim td:first-child { color: #999; }
.thumb { width: 1px; height: 60px; margin: 4px 4px 0 0; background: #888; }
.tabs { display: flex; height: 13px; border-top: 1px solid #777; color: #777; background: #f0f0f0; font-size: 7px; }
.tabs button { height: 11px; padding: 0 5px; }
.tabs .sel { border: 1px solid #444; border-top: 0; border-bottom-width: 2px; background: #fff; color: #222; }
.side .tabs { width: 86px; padding-left: 3px; overflow: hidden; }
.side .tabs .sel { padding: 0 3px; }
.navigator .pane { height: 88px; }
.navigator ul { display: grid; grid-template-rows: repeat(8, 1fr); height: 87px; }
.navigator li { display: flex; align-items: center; gap: 4px; white-space: nowrap; color: #222; }
.navigator .ic { width: 8px; height: 8px; }
.navigator .l0 { padding-left: 4px; } .navigator .l1 { padding-left: 6px; } .navigator .l2 { padding-left: 18px; } .navigator .l3 { padding-left: 30px; }
.navigator .bold { font-weight: 700; }
.knot { width: 5px; height: 5px; flex: none; border: 1px solid #aaa; color: #666; font: 5px/3px "Noto Sans", sans-serif; text-align: center; }
.knot.leaf { height: 1px; }

.desk { display: flex; flex-direction: column; flex: 1; min-width: 0; }
.windows { display: grid; grid-template-columns: 419fr 416fr 98fr; grid-template-rows: 157px 101px; height: 258px; overflow: hidden; background: #ababab; }
.win { display: flex; flex-direction: column; padding: 0 4px; overflow: hidden; border-right: 1px solid #666; border-bottom: 1px solid #666; background: #f1f0f1; }
.win:nth-child(odd) { grid-column: 1; } .win:nth-child(even) { grid-column: 2; padding: 0 2px 0 4px; border-right: 0; }
.win.cool { background: #eaf0f6; }
.win h3 { display: flex; align-items: center; height: 16px; flex: none; gap: 2px; color: #777; }
.win h3 .ic { width: 8px; height: 8px; }
.win .winctl { gap: 13px; }
.win .winctl svg { stroke: #aaa; }
.chart { display: block; width: 100%; flex: none; background: #000; }
.chart text { font: 5px "Noto Sans", sans-serif; fill: #e8e8e8; }
.grid line { stroke: #7c7c7c; stroke-width: 0.8; stroke-dasharray: 3 2; }
.bid { stroke: #4c5869; }
.frame { fill: none; stroke: #aaa; }
.base, .tick { stroke: #aaa; }
.wick { fill: none; stroke: #35cc35; }
.wick.thin { stroke: #2fb82f; }
.up { fill: #000; stroke: #3fdd3f; stroke-width: 0.8; }
.down { fill: #d7ffd7; stroke: #50dd50; stroke-width: 0.6; }
.solid { fill: #5ce35c; }
.average { fill: none; stroke: #b3262d; }
.osc { fill: none; stroke: #2d6b63; }
.split { stroke: #aaa; stroke-width: 2; }
.tag { fill: #8997ac; }
.chart .tagtext { fill: #101820; }
.charttabs { display: flex; height: 12px; border-top: 1px solid #777; padding-left: 2px; background: #edf0f4; color: #888; }
.charttabs button { width: 49px; height: 11px; }
.charttabs .sel { border: 1px solid #444; border-top: 0; background: #fff; color: #333; }
.arrows { margin-left: auto; padding-right: 3px; word-spacing: 5px; }

.toolbox { display: flex; flex: 1; min-height: 0; margin-top: 1px; border-top: 1px solid #bbb; }
.rail { display: flex; flex-direction: column; justify-content: space-between; width: 9px; flex: none; background: linear-gradient(#c4d9ef, #9fb9d8); color: #222; border-right: 1px solid #ddd; }
.rail button { height: 10px; background: #f0f0f0; }
.rail span { writing-mode: vertical-rl; text-orientation: sideways; transform: rotate(180deg); line-height: 8px; padding-top: 2px; }
.history { display: flex; flex-direction: column; flex: 1; min-width: 0; background: #fff; }
.history table { width: 100%; height: 138px; table-layout: fixed; border-collapse: collapse; line-height: 9px; }
.c0 { width: 84px; } .c4, .c5, .c6, .c7 { width: 83px; }
.c1, .c8 { width: 75px; } .c2 { width: 58px; } .c3, .c11 { width: 51px; } .c9 { width: 82px; } .c10 { width: auto; }
.history th { height: 14px; padding: 0 3px; font-weight: 400; text-align: right; color: #444; }
.history th:first-child, .history td:first-child { text-align: left; }
.history td { padding: 0 1px; border-right: 1px solid #ddd; border-bottom: 1px solid #ddd; text-align: right; white-space: pre; overflow: hidden; }
.history td:first-child { padding-left: 2px; }
.history th:nth-child(9) { padding-right: 6px; }
.history tbody tr:nth-child(even) { background: #ebebeb; }
.history .note { text-align: left; }
.history tfoot tr { background: #c7c7c7; font-weight: 700; color: #222; }
.history tfoot td { border: 0; font-size: 7px; }
.sort { width: 4px; height: 4px; margin-left: 10px; }
.doc { width: 6px; height: 8px; margin-right: 3px; vertical-align: -2px; fill: none; stroke-width: 1.5; }
.history .tabs { margin-top: auto; height: 14px; }
.history .tabs > button { padding: 0 5px; position: relative; }
.history .tabs > .sel { padding: 0 4px; }
.history .tabs > button + button:not(.sel)::before { content: ""; position: absolute; left: 0; top: 2px; height: 7px; border-left: 1px solid #999; }
.tabs sub { color: #d3413d; font-size: 5px; line-height: 5px; }
.services { display: flex; gap: 9px; margin-left: auto; padding-right: 2px; color: #222; }
.history .services button { display: flex; align-items: center; gap: 2px; padding: 0; }
.services .ic { width: 8px; height: 8px; }

.status { display: flex; align-items: center; height: 13px; flex: none; border-top: 1px solid #bbb; color: #222; }
.status .help { flex: 1; padding-left: 1px; }
.status .profile { width: 102px; padding-left: 2px; border-left: 1px solid #bbb; }
.status i { width: 43px; height: 10px; border-left: 1px solid #bbb; }
.status .net { display: flex; align-items: center; gap: 2px; width: 25px; white-space: nowrap; }
.net svg { width: 7px; height: 7px; flex: none; }
.taskbar { display: flex; justify-content: space-between; height: 15px; flex: none; overflow: hidden; background: linear-gradient(90deg, #d8e2f6, #d3e8ee 30%, #e1eee0 45%, #e4e8f0 52%, #d6e9ec 72%, #d8e5f1); color: #222; }
.weather { display: flex; gap: 1px; width: 120px; padding: 2px 0 0 10px; line-height: 9px; text-align: left; align-items: flex-start; }
.weather svg { width: 16px; height: 14px; }
.weather span { padding-top: 2px; }
.dock { display: flex; gap: 10px; padding: 6px 0 0 56px; align-items: flex-start; flex: none; }
.app-ic { width: 13px; height: 13px; flex: none; }
.find { display: flex; align-items: center; width: 116px; height: 14px; margin: 0 -2px; padding: 0 4px; border-radius: 7px; background: #f8fbfb; }
.find input { width: 70px; min-width: 0; flex: 1; border: 0; padding: 0 6px; background: none; font: inherit; }
.find input::placeholder { color: #444; }
.flower { width: 24px; height: 12px; }
.tray { display: flex; gap: 7px; padding: 4px 6px 0 60px; align-items: flex-start; line-height: 10px; }
.tray svg { width: 8px; height: 8px; margin-top: 4px; fill: none; stroke: #444; stroke-width: 1.5; }
.tray span { padding-top: 3px; font-size: 8px; }
.tray time { width: 32px; text-align: right; white-space: nowrap; font-size: 6px; }
.tray .bell { fill: #174c83; stroke: none; }

.watermark { position: absolute; inset: 0 0 15px; width: 100%; height: calc(100% - 15px); pointer-events: none; }
.watermark text { font: 14px "Noto Sans CJK SC", sans-serif; fill: #e4e4e4; fill-opacity: 0.56; text-anchor: middle; dominant-baseline: central; }
.shield { fill: #f4f4f4; fill-opacity: 0.5; }
.edge, .stripes, .stars { fill: none; stroke: #dadada; stroke-opacity: 0.36; }
.stripes { stroke-width: 2; }
.account { position: absolute; right: 32px; bottom: 23px; display: flex; align-items: center; gap: 8px; color: #8f8f8f; opacity: 0.85; pointer-events: none; font: 28px/38px "Noto Sans CJK SC", sans-serif; white-space: nowrap; }
.account svg { width: 38px; height: 32px; fill: currentColor; }
</style>
